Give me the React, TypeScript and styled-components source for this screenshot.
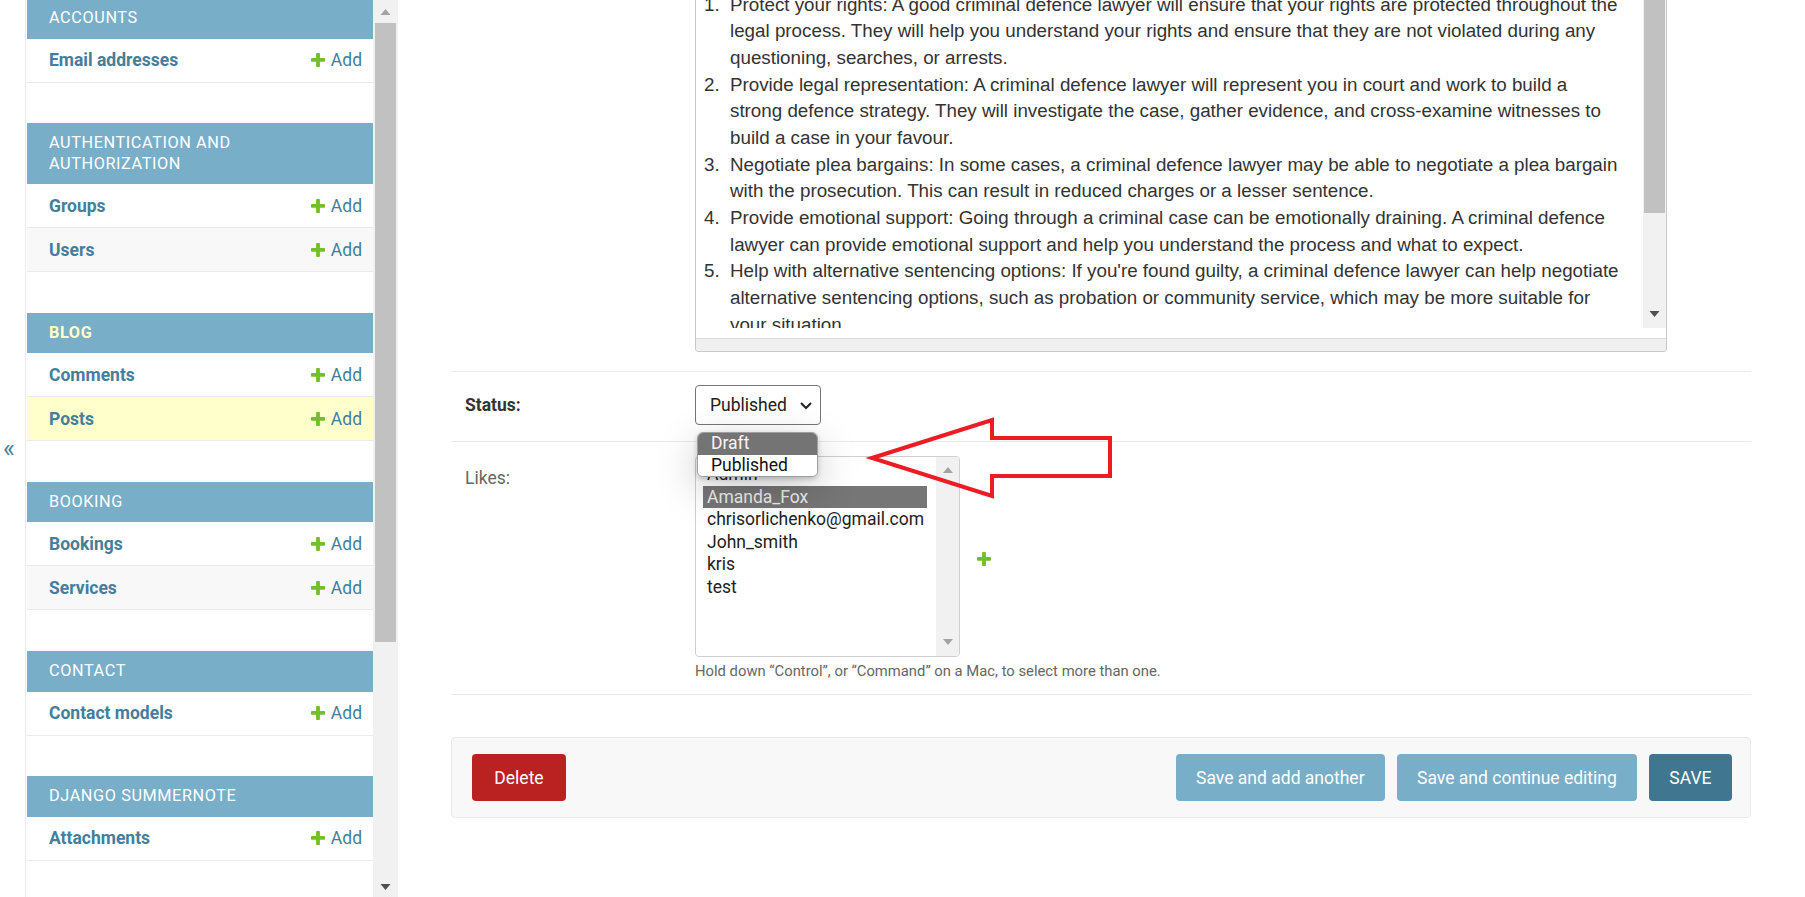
import React from 'react';
import styled, { createGlobalStyle } from 'styled-components';

const GlobalStyle = createGlobalStyle`
  html, body { margin: 0; padding: 0; background: #fff; }
  body {
    font-family: Roboto, "Liberation Sans", Arial, sans-serif;
    color: #333;
    overflow: hidden;
  }
  #root { height: 100vh; }
  * { box-sizing: border-box; }
`;

const Page = styled.div`
  display: flex;
  height: 897px;
  overflow: hidden;
  background: #fff;
`;

const Toggle = styled.div`
  width: 26px;
  flex: none;
  border-right: 1px solid #eaeaea;
  display: flex;
  align-items: center;
  padding-left: 3px;
  color: #447e9b;
  font-size: 25px;
  line-height: 1;
`;

const SidebarWrap = styled.div`
  display: flex;
  flex: none;
  padding-left: 1px;
`;

const Nav = styled.nav`
  width: 346px;
  margin-top: -2px;
`;

const Module = styled.section`
  margin-bottom: 40.6px;
`;

const Caption = styled.div<{ $current?: boolean }>`
  background: #79aec8;
  color: ${(p) => (p.$current ? '#ffc' : '#fff')};
  font-weight: ${(p) => (p.$current ? 700 : 400)};
  font-size: 16.25px;
  letter-spacing: 0.6px;
  text-transform: uppercase;
  line-height: 20.3px;
  padding: 10.15px 40px 10.15px 22px;
`;

const ModelRow = styled.div<{ $bg: string }>`
  display: flex;
  align-items: center;
  justify-content: space-between;
  height: 44px;
  padding: 0 11px 0 22px;
  background: ${(p) => p.$bg};
  border-bottom: 1px solid #eaeaea;
`;

const ModelLink = styled.a`
  color: #447e9b;
  font-weight: 700;
  font-size: 17.5px;
  text-decoration: none;
`;

const AddLink = styled.a`
  display: flex;
  align-items: center;
  gap: 6px;
  color: #447e9b;
  font-size: 17.5px;
  text-decoration: none;
`;

const ScrollTrack = styled.div<{ $w: number }>`
  width: ${(p) => p.$w}px;
  flex: none;
  background: #f1f1f1;
  display: flex;
  flex-direction: column;
`;

const ScrollArrow = styled.div<{ $h: number }>`
  height: ${(p) => p.$h}px;
  flex: none;
  display: flex;
  align-items: center;
  justify-content: center;
`;

const ScrollThumb = styled.div<{ $h: number; $m: number }>`
  height: ${(p) => p.$h}px;
  margin: 0 ${(p) => p.$m}px;
  background: #c1c1c1;
  flex: none;
`;

const ScrollSpacer = styled.div`
  flex: 1;
`;

const Main = styled.main`
  position: relative;
  flex: 1;
  padding: 0 54px 0 53px;
  overflow: hidden;
`;

const FormRow = styled.div<{ $pt: number; $pb: number; $center?: boolean }>`
  display: flex;
  align-items: ${(p) => (p.$center ? 'center' : 'flex-start')};
  padding: ${(p) => p.$pt}px 14px ${(p) => p.$pb}px;
  border-bottom: 1px solid #eaeaea;
`;

const Label = styled.label<{ $required?: boolean; $mt?: number }>`
  width: 230px;
  flex: none;
  font-size: 17.5px;
  line-height: 20px;
  margin-top: ${(p) => p.$mt ?? 0}px;
  color: ${(p) => (p.$required ? '#333' : '#666')};
  font-weight: ${(p) => (p.$required ? 700 : 400)};
`;

const FieldCol = styled.div`
  display: flex;
  flex-direction: column;
`;

const EditorBox = styled.div`
  width: 972px;
  border: 1px solid #c8c8c8;
  border-top: none;
  border-radius: 0 0 4px 4px;
  background: #fff;
  overflow: hidden;
`;

const EditorBody = styled.div`
  display: flex;
  height: 328px;
  overflow: hidden;
`;

const EditorText = styled.div`
  flex: 1;
  overflow: hidden;
  padding-left: 8px;
  font-family: "Liberation Sans", Arial, sans-serif;
  font-size: 18.8px;
  line-height: 26.67px;
  color: #333;
  white-space: nowrap;
`;

const EditorList = styled.div`
  margin-top: -8.3px;
`;

const ListItem = styled.div`
  display: flex;
`;

const ItemNum = styled.span`
  width: 26px;
  flex: none;
`;

const EditorPad = styled.div`
  height: 10px;
`;

const StatusBar = styled.div`
  height: 13px;
  border-top: 1px solid #dcdcdc;
  background: #f0f0f0;
`;

const SelectWrap = styled.div`
  position: relative;
`;

const SelectBox = styled.div`
  width: 126px;
  height: 40px;
  border: 1px solid #767676;
  border-radius: 4px;
  display: flex;
  align-items: center;
  justify-content: space-between;
  padding: 0 7px 0 14px;
  font-size: 17.5px;
  color: #222;
  background: #fff;
`;

const Popup = styled.div`
  position: absolute;
  left: 2px;
  top: 47px;
  width: 121px;
  border: 1px solid #9f9f9f;
  border-radius: 6px;
  background: #fff;
  overflow: hidden;
  z-index: 5;
  box-shadow: 0 12px 40px rgba(0, 0, 0, 0.22), 0 2px 5px rgba(0, 0, 0, 0.2);
`;

const PopupOption = styled.div<{ $active?: boolean }>`
  height: 21.5px;
  line-height: 21.5px;
  padding-left: 13px;
  font-size: 17.5px;
  background: ${(p) => (p.$active ? '#747474' : '#fff')};
  color: ${(p) => (p.$active ? '#f6f6f6' : '#111')};
`;

const MultiRow = styled.div`
  display: flex;
  align-items: center;
  gap: 17px;
`;

const MultiBox = styled.div`
  width: 265px;
  height: 201px;
  border: 1px solid #cfcfcf;
  border-radius: 4px;
  display: flex;
  overflow: hidden;
  background: #fff;
`;

const OptionList = styled.div`
  flex: 1;
  padding: 6px 9px 0 7px;
`;

const OptionItem = styled.div<{ $selected?: boolean }>`
  height: 22.5px;
  line-height: 22.5px;
  padding-left: 4px;
  font-size: 17.5px;
  white-space: nowrap;
  background: ${(p) => (p.$selected ? '#767676' : 'transparent')};
  color: ${(p) => (p.$selected ? '#eeeeee' : '#222')};
`;

const AddAnother = styled.span`
  display: flex;
  margin-top: 4px;
`;

const HelpText = styled.div`
  margin-top: 4px;
  font-size: 14.8px;
  line-height: 20px;
  color: #666;
`;

const SubmitRow = styled.div`
  margin-top: 42px;
  display: flex;
  justify-content: space-between;
  padding: 16px 18px 16px 20px;
  background: #f8f8f8;
  border: 1px solid #eaeaea;
  border-radius: 4px;
`;

const ButtonGroup = styled.div`
  display: flex;
  gap: 11.5px;
`;

const Button = styled.button<{ $bg: string; $minW?: number }>`
  height: 47px;
  min-width: ${(p) => p.$minW ?? 0}px;
  padding: 0 20.5px;
  border: none;
  border-radius: 4px;
  background: ${(p) => p.$bg};
  color: #fff;
  font-family: Roboto, "Liberation Sans", Arial, sans-serif;
  font-size: 17.5px;
  cursor: pointer;
`;

const Annotation = styled.svg`
  position: absolute;
  left: 470px;
  top: 416px;
  overflow: visible;
  pointer-events: none;
  z-index: 10;
`;

const Triangle = ({ dir, color, w = 11, h = 6 }: { dir: 'up' | 'down'; color: string; w?: number; h?: number }) => (
  <svg width={w} height={h} viewBox="0 0 10 6">
    <polygon points={dir === 'up' ? '0,6 5,0 10,6' : '0,0 10,0 5,6'} fill={color} />
  </svg>
);

const PlusIcon = ({ size = 14 }: { size?: number }) => (
  <svg width={size} height={size} viewBox="192 192 1408 1408">
    <path
      fill="#70bf2b"
      d="M1600 796v192q0 40-28 68t-68 28h-416v416q0 40-28 68t-68 28h-192q-40 0-68-28t-28-68v-416h-416q-40 0-68-28t-28-68v-192q0-40 28-68t68-28h416v-416q0-40 28-68t68-28h192q40 0 68 28t28 68v416h416q40 0 68 28t28 68z"
    />
  </svg>
);

type ModuleDef = { name: string; current?: boolean; models: { name: string; current?: boolean }[] };

const modules: ModuleDef[] = [
  { name: 'Accounts', models: [{ name: 'Email addresses' }] },
  { name: 'Authentication and Authorization', models: [{ name: 'Groups' }, { name: 'Users' }] },
  { name: 'Blog', current: true, models: [{ name: 'Comments' }, { name: 'Posts', current: true }] },
  { name: 'Booking', models: [{ name: 'Bookings' }, { name: 'Services' }] },
  { name: 'Contact', models: [{ name: 'Contact models' }] },
  { name: 'Django Summernote', models: [{ name: 'Attachments' }] },
];

const items: string[][] = [
  [
    'Protect your rights: A good criminal defence lawyer will ensure that your rights are protected throughout the',
    'legal process. They will help you understand your rights and ensure that they are not violated during any',
    'questioning, searches, or arrests.',
  ],
  [
    'Provide legal representation: A criminal defence lawyer will represent you in court and work to build a',
    'strong defence strategy. They will investigate the case, gather evidence, and cross-examine witnesses to',
    'build a case in your favour.',
  ],
  [
    'Negotiate plea bargains: In some cases, a criminal defence lawyer may be able to negotiate a plea bargain',
    'with the prosecution. This can result in reduced charges or a lesser sentence.',
  ],
  [
    'Provide emotional support: Going through a criminal case can be emotionally draining. A criminal defence',
    'lawyer can provide emotional support and help you understand the process and what to expect.',
  ],
  [
    "Help with alternative sentencing options: If you're found guilty, a criminal defence lawyer can help negotiate",
    'alternative sentencing options, such as probation or community service, which may be more suitable for',
    'your situation.',
  ],
];

const users = ['Admin', 'Amanda_Fox', 'chrisorlichenko@gmail.com', 'John_smith', 'kris', 'test'];

export default function App() {
  return (
    <>
      <GlobalStyle />
      <Page>
        <Toggle>«</Toggle>
        <SidebarWrap>
          <Nav>
            {modules.map((m) => (
              <Module key={m.name}>
                <Caption $current={m.current}>{m.name}</Caption>
                {m.models.map((model, i) => (
                  <ModelRow key={model.name} $bg={model.current ? '#ffffcc' : i % 2 === 1 ? '#f8f8f8' : '#fff'}>
                    <ModelLink href="#">{model.name}</ModelLink>
                    <AddLink href="#">
                      <PlusIcon />
                      Add
                    </AddLink>
                  </ModelRow>
                ))}
              </Module>
            ))}
          </Nav>
          <ScrollTrack $w={25}>
            <ScrollArrow $h={23}>
              <Triangle dir="up" color="#a3a3a3" />
            </ScrollArrow>
            <ScrollThumb $h={619} $m={2} />
            <ScrollSpacer />
            <ScrollArrow $h={21}>
              <Triangle dir="down" color="#505050" />
            </ScrollArrow>
          </ScrollTrack>
        </SidebarWrap>
        <Main>
          <FormRow $pt={0} $pb={19}>
            <Label />
            <EditorBox>
              <EditorBody>
                <EditorText>
                  <EditorList>
                    {items.map((lines, i) => (
                      <ListItem key={i}>
                        <ItemNum>{i + 1}.</ItemNum>
                        <span>
                          {lines.map((l, j) => (
                            <React.Fragment key={j}>
                              {l}
                              {j < lines.length - 1 && <br />}
                            </React.Fragment>
                          ))}
                        </span>
                      </ListItem>
                    ))}
                  </EditorList>
                </EditorText>
                <ScrollTrack $w={23}>
                  <ScrollThumb $h={213} $m={1} />
                  <ScrollSpacer />
                  <ScrollArrow $h={28}>
                    <Triangle dir="down" color="#505050" />
                  </ScrollArrow>
                </ScrollTrack>
              </EditorBody>
              <EditorPad />
              <StatusBar />
            </EditorBox>
          </FormRow>

          <FormRow $pt={13} $pb={16} $center>
            <Label $required>Status:</Label>
            <SelectWrap>
              <SelectBox>
                <span>Published</span>
                <svg width="14" height="9" viewBox="0 0 14 9">
                  <polyline points="2,2 7,7 12,2" fill="none" stroke="#222" strokeWidth="2" />
                </svg>
              </SelectBox>
              <Popup>
                <PopupOption $active>Draft</PopupOption>
                <PopupOption>Published</PopupOption>
              </Popup>
            </SelectWrap>
          </FormRow>

          <FormRow $pt={14} $pb={13}>
            <Label $mt={12}>Likes:</Label>
            <FieldCol>
              <MultiRow>
                <MultiBox>
                  <OptionList>
                    {users.map((u) => (
                      <OptionItem key={u} $selected={u === 'Amanda_Fox'}>
                        {u}
                      </OptionItem>
                    ))}
                  </OptionList>
                  <ScrollTrack $w={23}>
                    <ScrollArrow $h={26}>
                      <Triangle dir="up" color="#a3a3a3" w={10} h={6} />
                    </ScrollArrow>
                    <ScrollSpacer />
                    <ScrollArrow $h={28}>
                      <Triangle dir="down" color="#a3a3a3" w={10} h={6} />
                    </ScrollArrow>
                  </ScrollTrack>
                </MultiBox>
                <AddAnother>
                  <PlusIcon size={14} />
                </AddAnother>
              </MultiRow>
              <HelpText>Hold down “Control”, or “Command” on a Mac, to select more than one.</HelpText>
            </FieldCol>
          </FormRow>

          <SubmitRow>
            <Button $bg="#ba2121" $minW={94}>Delete</Button>
            <ButtonGroup>
              <Button $bg="#79aec8">Save and add another</Button>
              <Button $bg="#79aec8">Save and continue editing</Button>
              <Button $bg="#417690">SAVE</Button>
            </ButtonGroup>
          </SubmitRow>

          <Annotation width="246" height="84" viewBox="0 0 246 84">
            <polygon
              points="4,42 124,4 124,22 242,22 242,60 124,60 124,80"
              fill="none"
              stroke="#ed1c24"
              strokeWidth="4"
              strokeLinejoin="miter"
            />
          </Annotation>
        </Main>
      </Page>
    </>
  );
}
